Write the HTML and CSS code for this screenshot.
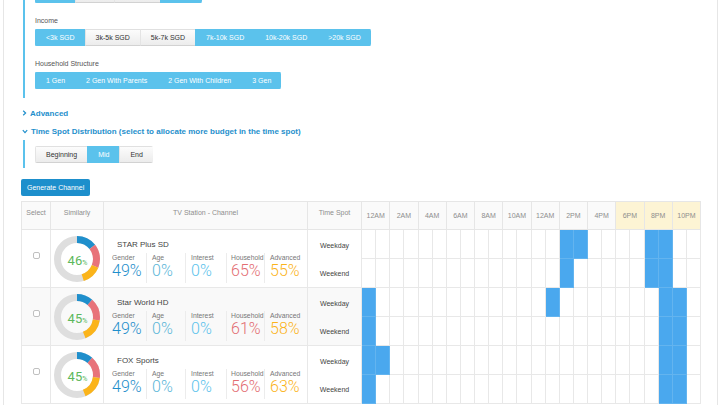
FILE: index.html
```html
<!DOCTYPE html>
<html>
<head>
<meta charset="utf-8">
<link rel="stylesheet" href="styles.css">
</head>
<body>
<div class="page">
  <div class="filters">
    <div class="group top">
      <span class="btn on w40"></span><span class="btn w39"></span><span class="btn w46"></span><span class="btn on w42"></span>
    </div>
    <div class="label">Income</div>
    <div class="group">
      <span class="btn on">&lt;3k SGD</span><span class="btn">3k-5k SGD</span><span class="btn">5k-7k SGD</span><span class="btn on">7k-10k SGD</span><span class="btn on">10k-20k SGD</span><span class="btn on">&gt;20k SGD</span>
    </div>
    <div class="label">Household Structure</div>
    <div class="group">
      <span class="btn on">1 Gen</span><span class="btn on">2 Gen With Parents</span><span class="btn on">2 Gen With Children</span><span class="btn on">3 Gen</span>
    </div>
  </div>

  <div class="toggle first"><svg width="5" height="6" viewBox="0 0 5 6"><polyline points="1.2,0.8 3.6,3 1.2,5.2" fill="none" stroke="#1f8fcc" stroke-width="1.2"/></svg><span>Advanced</span></div>
  <div class="toggle"><svg width="6" height="5" viewBox="0 0 6 5"><polyline points="0.8,1.2 3,3.6 5.2,1.2" fill="none" stroke="#1f8fcc" stroke-width="1.2"/></svg><span>Time Spot Distribution (select to allocate more budget in the time spot)</span></div>

  <div class="spot">
    <div class="group">
      <span class="btn">Beginning</span><span class="btn on">Mid</span><span class="btn">End</span>
    </div>
  </div>

  <div class="gen">Generate Channel</div>

  <table class="grid">
    <colgroup>
      <col class="c-sel"><col class="c-sim"><col class="c-st"><col class="c-ts">
      <col class="c-h"><col class="c-h"><col class="c-h"><col class="c-h"><col class="c-h"><col class="c-h"><col class="c-h"><col class="c-h"><col class="c-h"><col class="c-h"><col class="c-h"><col class="c-h"><col class="c-h"><col class="c-h"><col class="c-h"><col class="c-h"><col class="c-h"><col class="c-h"><col class="c-h"><col class="c-h"><col class="c-h"><col class="c-h"><col class="c-h"><col class="c-h">
    </colgroup>
    <thead>
      <tr>
        <th class="hl">Select</th><th class="hl">Similarly</th><th class="hl">TV Station - Channel</th><th class="hl">Time Spot</th>
        <th colspan="2">12AM</th><th colspan="2">2AM</th><th colspan="2">4AM</th><th colspan="2">6AM</th><th colspan="2">8AM</th><th colspan="2">10AM</th><th colspan="2">12AM</th><th colspan="2">2PM</th><th colspan="2">4PM</th><th colspan="2" class="eve">6PM</th><th colspan="2" class="eve">8PM</th><th colspan="2" class="eve">10PM</th>
      </tr>
    </thead>
    <tbody>
      <!-- STAR Plus SD -->
      <tr>
        <td rowspan="2" class="sel"><span class="cb"></span></td>
        <td rowspan="2" class="sim">
          <svg class="donut" width="46" height="46" viewBox="0 0 46 46">
            <circle cx="23" cy="23" r="19.5" fill="none" stroke="#dedede" stroke-width="7"/>
            <g transform="rotate(-90 23 23)" fill="none" stroke-width="7">
              <circle cx="23" cy="23" r="19.5" stroke="#1f8fcc" stroke-dasharray="17.5 200" stroke-dashoffset="0"/>
              <circle cx="23" cy="23" r="19.5" stroke="#e8737a" stroke-dasharray="20.5 200" stroke-dashoffset="-17.5"/>
              <circle cx="23" cy="23" r="19.5" stroke="#fbb41a" stroke-dasharray="17 200" stroke-dashoffset="-38"/>
            </g>
            <text x="23.5" y="28.5" text-anchor="middle" class="dt"><tspan class="dn">46</tspan><tspan class="dp">%</tspan></text>
          </svg>
        </td>
        <td rowspan="2" class="st">
          <div class="name">STAR Plus SD</div>
          <div class="metrics">
            <div class="m"><div class="ml">Gender</div><div class="mv v1">49%</div></div>
            <div class="m"><div class="ml">Age</div><div class="mv v2">0%</div></div>
            <div class="m"><div class="ml">Interest</div><div class="mv v3">0%</div></div>
            <div class="m"><div class="ml">Household</div><div class="mv v4">65%</div></div>
            <div class="m"><div class="ml">Advanced</div><div class="mv v5">55%</div></div>
          </div>
        </td>
        <td rowspan="2" class="ts"><div class="wd">Weekday</div><div class="we">Weekend</div></td>
        <td></td><td></td><td></td><td></td><td></td><td></td><td></td><td></td><td></td><td></td><td></td><td></td><td></td><td></td><td class="f"></td><td class="f"></td><td></td><td></td><td></td><td></td><td class="f"></td><td class="f"></td><td></td><td></td>
      </tr>
      <tr>
        <td></td><td></td><td></td><td></td><td></td><td></td><td></td><td></td><td></td><td></td><td></td><td></td><td></td><td></td><td class="f"></td><td></td><td></td><td></td><td></td><td></td><td class="f"></td><td class="f"></td><td></td><td></td>
      </tr>

      <!-- Star World HD -->
      <tr class="alt">
        <td rowspan="2" class="sel"><span class="cb"></span></td>
        <td rowspan="2" class="sim">
          <svg class="donut" width="46" height="46" viewBox="0 0 46 46">
            <circle cx="23" cy="23" r="19.5" fill="none" stroke="#dedede" stroke-width="7"/>
            <g transform="rotate(-90 23 23)" fill="none" stroke-width="7">
              <circle cx="23" cy="23" r="19.5" stroke="#1f8fcc" stroke-dasharray="14 200" stroke-dashoffset="0"/>
              <circle cx="23" cy="23" r="19.5" stroke="#e8737a" stroke-dasharray="19.5 200" stroke-dashoffset="-14"/>
              <circle cx="23" cy="23" r="19.5" stroke="#fbb41a" stroke-dasharray="20 200" stroke-dashoffset="-33.5"/>
            </g>
            <text x="23.5" y="28.5" text-anchor="middle" class="dt"><tspan class="dn">45</tspan><tspan class="dp">%</tspan></text>
          </svg>
        </td>
        <td rowspan="2" class="st">
          <div class="name">Star World HD</div>
          <div class="metrics">
            <div class="m"><div class="ml">Gender</div><div class="mv v1">49%</div></div>
            <div class="m"><div class="ml">Age</div><div class="mv v2">0%</div></div>
            <div class="m"><div class="ml">Interest</div><div class="mv v3">0%</div></div>
            <div class="m"><div class="ml">Household</div><div class="mv v4">61%</div></div>
            <div class="m"><div class="ml">Advanced</div><div class="mv v5">58%</div></div>
          </div>
        </td>
        <td rowspan="2" class="ts"><div class="wd">Weekday</div><div class="we">Weekend</div></td>
        <td class="f"></td><td></td><td></td><td></td><td></td><td></td><td></td><td></td><td></td><td></td><td></td><td></td><td></td><td class="f"></td><td></td><td></td><td></td><td></td><td></td><td></td><td></td><td class="f"></td><td class="f"></td><td></td>
      </tr>
      <tr class="alt">
        <td class="f"></td><td></td><td></td><td></td><td></td><td></td><td></td><td></td><td></td><td></td><td></td><td></td><td></td><td></td><td></td><td></td><td></td><td></td><td></td><td></td><td></td><td class="f"></td><td class="f"></td><td></td>
      </tr>

      <!-- FOX Sports -->
      <tr>
        <td rowspan="2" class="sel"><span class="cb"></span></td>
        <td rowspan="2" class="sim">
          <svg class="donut" width="46" height="46" viewBox="0 0 46 46">
            <circle cx="23" cy="23" r="19.5" fill="none" stroke="#dedede" stroke-width="7"/>
            <g transform="rotate(-90 23 23)" fill="none" stroke-width="7">
              <circle cx="23" cy="23" r="19.5" stroke="#1f8fcc" stroke-dasharray="14 200" stroke-dashoffset="0"/>
              <circle cx="23" cy="23" r="19.5" stroke="#e8737a" stroke-dasharray="19 200" stroke-dashoffset="-14"/>
              <circle cx="23" cy="23" r="19.5" stroke="#fbb41a" stroke-dasharray="20.5 200" stroke-dashoffset="-33"/>
            </g>
            <text x="23.5" y="28.5" text-anchor="middle" class="dt"><tspan class="dn">45</tspan><tspan class="dp">%</tspan></text>
          </svg>
        </td>
        <td rowspan="2" class="st">
          <div class="name">FOX Sports</div>
          <div class="metrics">
            <div class="m"><div class="ml">Gender</div><div class="mv v1">49%</div></div>
            <div class="m"><div class="ml">Age</div><div class="mv v2">0%</div></div>
            <div class="m"><div class="ml">Interest</div><div class="mv v3">0%</div></div>
            <div class="m"><div class="ml">Household</div><div class="mv v4">56%</div></div>
            <div class="m"><div class="ml">Advanced</div><div class="mv v5">63%</div></div>
          </div>
        </td>
        <td rowspan="2" class="ts"><div class="wd">Weekday</div><div class="we">Weekend</div></td>
        <td class="f"></td><td class="f"></td><td></td><td></td><td></td><td></td><td></td><td></td><td></td><td></td><td></td><td></td><td></td><td></td><td></td><td></td><td></td><td></td><td></td><td></td><td></td><td class="f"></td><td class="f"></td><td></td>
      </tr>
      <tr>
        <td class="f"></td><td></td><td></td><td></td><td></td><td></td><td></td><td></td><td></td><td></td><td></td><td></td><td></td><td></td><td></td><td></td><td></td><td></td><td></td><td></td><td></td><td class="f"></td><td class="f"></td><td></td>
      </tr>
    </tbody>
  </table>
</div>
</body>
</html>
```
FILE: styles.css
```css
* { box-sizing: border-box; }
html, body { margin: 0; padding: 0; background: #ffffff; }
body {
  font-family: "Liberation Sans", Arial, Helvetica, sans-serif;
  color: #333;
}
.page {
  margin: 0 2px 0 3px;
  height: 405px;
  overflow: hidden;
  border-left: 1px solid #e6e6e6;
  border-right: 1px solid #e6e6e6;
  padding-left: 17px;
}
.filters {
  display: flow-root;
  margin-left: 2px;
  border-left: 2px solid #5bc2ec;
  padding: 0 0 9px 10px;
}
.group {
  display: flex;
  width: max-content;
  height: 17px;
  border-radius: 2px;
  overflow: hidden;
  font-size: 7px;
}
.group.top { margin-top: -14px; }
.btn {
  display: flex;
  align-items: center;
  padding: 0 10px;
  background: linear-gradient(#fcfcfc, #ececec);
  color: #333;
  border-top: 1px solid #e0e0e0;
  border-bottom: 1px solid #d2d2d2;
  border-left: 1px solid #e4e4e4;
}
.btn.on {
  background: #5bc2ec;
  color: #fff;
  border-color: #5bc2ec;
}
.w40 { width: 40px; }
.w39 { width: 39px; }
.w46 { width: 46px; }
.w42 { width: 42px; }
.label {
  font-size: 7px;
  line-height: 10px;
  color: #555;
  margin: 13px 0 3px;
}
.toggle {
  display: flex;
  align-items: center;
  gap: 3px;
  padding-left: 1px;
  margin-top: 6px;
  height: 12px;
  font-size: 8px;
  font-weight: bold;
  color: #1f8fcc;
}
.toggle.first { margin-top: 9px; }
.toggle svg { display: block; }
.spot {
  margin: 3px 0 0 2px;
  border-left: 2px solid #5bc2ec;
  padding: 6px 0 5px 10px;
}
.gen {
  margin-top: 11px;
  width: max-content;
  height: 17px;
  line-height: 17px;
  padding: 0 6px;
  border-radius: 2px;
  background: #1d8fcc;
  color: #fff;
  font-size: 7px;
}
.grid {
  margin-top: 5px;
  width: 679px;
  table-layout: fixed;
  border-collapse: collapse;
  border: 1px solid #e6e6e6;
}
.c-sel { width: 29px; }
.c-sim { width: 53px; }
.c-st { width: 204px; }
.c-ts { width: 54px; }
.c-h { width: 14.125px; }
.grid th {
  height: 28px;
  padding: 0;
  font-weight: normal;
  font-size: 7px;
  color: #8e8e8e;
  background: #fafafa;
  border: 1px solid #e6e6e6;
  text-align: center;
  white-space: nowrap;
}
.grid th.hl { vertical-align: top; padding-top: 7px; }
.grid th.eve { background: #fdf4d4; }
.grid td {
  height: 29px;
  padding: 0;
  border: 1px solid #e8e8e8;
}
.grid td.f { background: #4aa8ee; border-color: #63b4ef; }
.grid tr.alt td.sel,
.grid tr.alt td.sim,
.grid tr.alt td.st,
.grid tr.alt td.ts { background: #f9f9f9; }
.grid td.sel { text-align: center; vertical-align: middle; padding-bottom: 7px; }
.cb {
  display: inline-block;
  width: 7px;
  height: 7px;
  border: 1px solid #c0c0c0;
  border-radius: 2px;
  background: #fff;
  vertical-align: middle;
}
.grid td.sim { text-align: center; vertical-align: middle; }
.donut { display: block; margin: 0 auto; }
.dt { font-family: Roboto, "Liberation Sans", sans-serif; font-weight: 400; fill: #5cb85c; }
.dn { font-size: 13px; }
.dp { font-size: 7px; }
.grid td.st { vertical-align: top; padding-left: 8px; }
.name {
  font-size: 8px;
  line-height: 10px;
  color: #444;
  margin-top: 10px;
  padding-left: 5px;
}
.metrics { display: flex; margin-top: 3px; }
.m { height: 30px; border-left: 1px solid #ececec; padding-left: 5px; width: 39px; }
.m:first-child { border-left: none; padding-left: 0; width: 34px; }
.m:nth-child(3) { width: 41px; }
.m:nth-child(4) { width: 38px; padding-left: 4px; }
.ml { font-size: 6.8px; line-height: 9px; color: #777; white-space: nowrap; }
.mv {
  font-family: Roboto, "Liberation Sans", sans-serif;
  font-weight: 300;
  font-size: 16px;
  line-height: 18px;
  white-space: nowrap;
}
.v1 { color: #1f8fcc; }
.v2 { color: #5bb6d8; }
.v3 { color: #5bc2ec; }
.v4 { color: #e36d72; }
.v5 { color: #fbb41a; }
.grid td.ts { vertical-align: top; text-align: center; font-size: 7px; color: #444; }
.ts .wd { line-height: 10px; margin-top: 11px; }
.ts .we { line-height: 10px; margin-top: 18px; }
```
